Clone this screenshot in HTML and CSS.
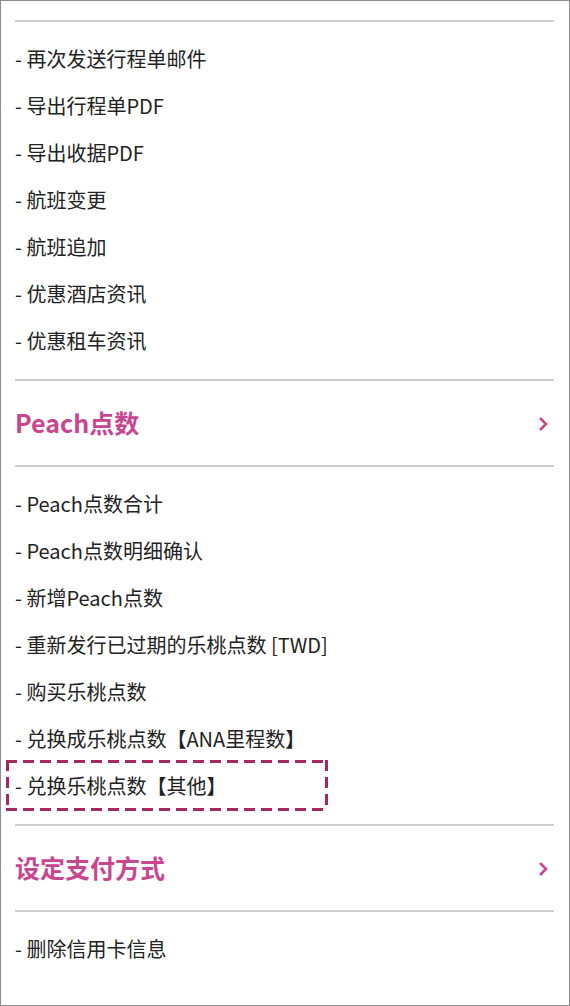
FILE: index.html
```html
<html>
    <head>
        <meta charset="utf-8">
        <title>Peach 会员菜单</title>
        <link rel="stylesheet" href="styles.css">
    </head>
    <body>
        <div id="menu">
            <ul class="links">
                <li><a>- 再次发送行程单邮件</a></li>
                <li><a>- 导出行程单PDF</a></li>
                <li><a>- 导出收据PDF</a></li>
                <li><a>- 航班变更</a></li>
                <li><a>- 航班追加</a></li>
                <li><a>- 优惠酒店资讯</a></li>
                <li><a>- 优惠租车资讯</a></li>
            </ul>

            <div class="section">
                <h2>Peach点数</h2>
                <svg class="arrow" width="12" height="16" viewBox="0 0 12 16"><polyline points="3,2 9,8 3,14" fill="none" stroke="#c9468f" stroke-width="2.6"/></svg>
            </div>

            <ul class="links">
                <li><a>- Peach点数合计</a></li>
                <li><a>- Peach点数明细确认</a></li>
                <li><a>- 新增Peach点数</a></li>
                <li><a>- 重新发行已过期的乐桃点数 [TWD]</a></li>
                <li><a>- 购买乐桃点数</a></li>
                <li><a>- 兑换成乐桃点数【ANA里程数】</a></li>
                <li class="focused"><a>- 兑换乐桃点数【其他】</a></li>
            </ul>

            <div class="section">
                <h2>设定支付方式</h2>
                <svg class="arrow" width="12" height="16" viewBox="0 0 12 16"><polyline points="3,2 9,8 3,14" fill="none" stroke="#c9468f" stroke-width="2.6"/></svg>
            </div>

            <ul class="links last">
                <li><a>- 删除信用卡信息</a></li>
            </ul>
        </div>
    </body>
</html>
```

FILE: styles.css
```css
* {
    font-family: "Noto Sans CJK SC", "Noto Sans", sans-serif;
    box-sizing: border-box;
}

body {
    margin: 0;
    background-color: #ffffff;
}

#menu {
    width: 570px;
    height: 1006px;
    border: 1px solid #8c8c8c;
    padding: 19px 15px 0 14px;
    overflow: hidden;
}

.links {
    list-style: none;
    margin: 0;
    padding: 13px 0 15px;
    border-top: 2px solid #cfcfcf;
}

.links li {
    height: 47px;
    line-height: 47px;
    font-size: 20px;
    color: #222222;
}

/* dashed focus box, drawn with gradients to get long dashes */
.links li.focused {
    margin: -2px 0 -2px -9px;
    padding-left: 9px;
    width: 322px;
    height: 51px;
    line-height: 51px;
    background:
        repeating-linear-gradient(90deg, #a6285f 0 11px, transparent 11px 17px) left top / 100% 3px no-repeat,
        repeating-linear-gradient(90deg, #a6285f 0 11px, transparent 11px 17px) left bottom / 100% 3px no-repeat,
        repeating-linear-gradient(180deg, #a6285f 0 11px, transparent 11px 17px) left top / 3px 100% no-repeat,
        repeating-linear-gradient(180deg, #a6285f 0 11px, transparent 11px 17px) right top / 3px 100% no-repeat;
}

.last {
    padding-bottom: 0;
}

.section {
    display: flex;
    align-items: center;
    justify-content: space-between;
    height: 86px;
    border-top: 2px solid #cfcfcf;
}

.section h2 {
    margin: -3px 0 0;
    font-size: 25px;
    font-weight: 700;
    color: #c9468f;
}

.arrow {
    margin-right: 5px;
    margin-top: 1px;
}
```
